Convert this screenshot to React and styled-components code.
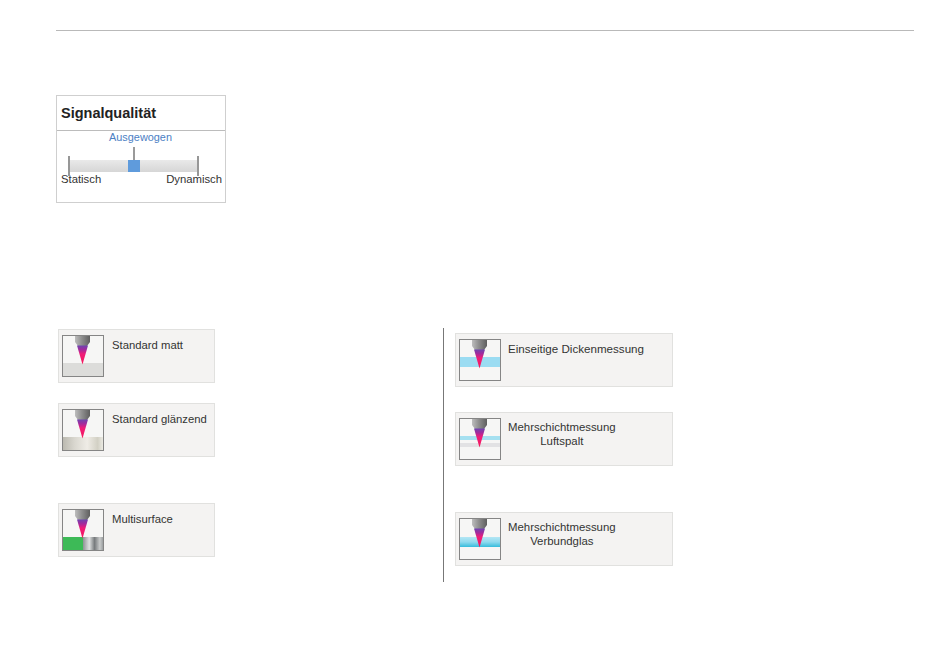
import React from 'react';
import styled, { createGlobalStyle } from 'styled-components';

const GlobalStyle = createGlobalStyle`
  html, body {
    margin: 0;
    background: #fff;
    font-family: "Liberation Sans", Arial, sans-serif;
  }
`;

const Page = styled.div`
  width: 950px;
  height: 665px;
  box-sizing: border-box;
  padding: 30px 36px 0 56px;
  overflow: hidden;
`;

const Rule = styled.div`
  height: 1px;
  background: #b9b9b9;
`;

const SignalPanel = styled.section`
  width: 170px;
  height: 108px;
  box-sizing: border-box;
  margin-top: 64px;
  border: 1px solid #cfcfcf;
`;

const PanelTitle = styled.h2`
  margin: 0;
  height: 35px;
  box-sizing: border-box;
  padding: 9px 0 0 4px;
  border-bottom: 1px solid #bcbcbc;
  font-size: 14.5px;
  line-height: 16px;
  font-weight: 700;
  color: #222;
`;

const SliderBlock = styled.div`
  padding: 0 3px 0 4px;
`;

const SliderValue = styled.div`
  margin-left: 48px;
  font-size: 10.9px;
  line-height: 12px;
  color: #4c7fc4;
`;

const Track = styled.div`
  position: relative;
  height: 12px;
  margin: 17px 24px 0 8px;
  background: linear-gradient(#e9e9e9, #d6d6d6);
`;

const Tick = styled.span`
  position: absolute;
  top: -4px;
  ${({ $side }) => $side}: -1px;
  width: 2px;
  height: 20px;
  background: #979797;
`;

const Thumb = styled.span`
  position: absolute;
  left: 59px;
  top: 0;
  width: 12px;
  height: 12px;
  background: #5f9bdc;

  &::before {
    content: '';
    position: absolute;
    left: 5px;
    top: -13px;
    width: 2px;
    height: 13px;
    background: #9a9a9a;
  }
`;

const SliderLabels = styled.div`
  display: flex;
  justify-content: space-between;
  margin-top: 1px;
  font-size: 11.3px;
  line-height: 13px;
  color: #333;
`;

const Columns = styled.div`
  display: flex;
  align-items: flex-start;
  margin-top: 125px;
`;

const LeftColumn = styled.div`
  width: 387px;
  padding: 1px 0 0 2px;
  box-sizing: border-box;
`;

const RightColumn = styled.div`
  height: 254px;
  box-sizing: border-box;
  border-left: 1px solid #777;
  padding: 5px 0 0 11px;
`;

const Card = styled.div`
  display: flex;
  align-items: flex-start;
  gap: 8px;
  width: ${({ $wide }) => ($wide ? 218 : 157)}px;
  height: 54px;
  box-sizing: border-box;
  margin-top: ${({ $gap }) => $gap || 0}px;
  padding: 5px 0 0 3px;
  background: #f4f3f2;
  border: 1px solid #e1e1df;
`;

const IconFrame = styled.svg`
  display: block;
  flex: none;
  width: 42px;
  height: 42px;
`;

const CardLabel = styled.div`
  margin-top: ${({ $tight }) => ($tight ? 2 : 3)}px;
  margin-left: ${({ $wide }) => ($wide ? -1 : 0)}px;
  font-size: ${({ $size }) => $size || 11.3}px;
  line-height: 14px;
  text-align: center;
  color: #333;
`;

function Sample({ kind }) {
  if (kind === 'matt') return <rect x="0" y="28" width="42" height="14" fill="#dcdcda" />;
  if (kind === 'gloss') return <rect x="0" y="28" width="42" height="14" fill="url(#gloss)" />;
  if (kind === 'multi') {
    return (
      <>
        <rect x="0" y="28" width="21" height="14" fill="#3dba57" />
        <rect x="21" y="28" width="21" height="14" fill="url(#metal)" />
      </>
    );
  }
  if (kind === 'single') return <rect x="0" y="18" width="42" height="10" fill="#9bdcf2" />;
  if (kind === 'gap') {
    return (
      <>
        <rect x="0" y="18" width="42" height="4" fill="#a5e0f0" />
        <rect x="0" y="25" width="42" height="4" fill="#e2e2e4" />
      </>
    );
  }
  return <rect x="0" y="19" width="42" height="10" fill="url(#laminate)" />;
}

function ProbeIcon({ kind }) {
  return (
    <IconFrame viewBox="0 0 42 42">
      <defs>
        <linearGradient id="steel" x1="0" x2="1" y1="0" y2="0">
          <stop offset="0" stopColor="#bdbdbd" />
          <stop offset="0.45" stopColor="#8f8f8f" />
          <stop offset="1" stopColor="#5f5f5f" />
        </linearGradient>
        <linearGradient id="beam" x1="0" x2="0" y1="0" y2="1">
          <stop offset="0" stopColor="#6d45b0" />
          <stop offset="0.22" stopColor="#a32a9c" />
          <stop offset="0.45" stopColor="#f01c78" />
          <stop offset="1" stopColor="#f5185a" />
        </linearGradient>
        <linearGradient id="gloss" x1="0" x2="1" y1="0" y2="0">
          <stop offset="0" stopColor="#b9b7ae" />
          <stop offset="0.3" stopColor="#d9d7cf" />
          <stop offset="0.6" stopColor="#efece6" />
          <stop offset="0.85" stopColor="#d2d0c4" />
          <stop offset="1" stopColor="#f0efe9" />
        </linearGradient>
        <linearGradient id="metal" x1="0" x2="1" y1="0" y2="0">
          <stop offset="0" stopColor="#8e9294" />
          <stop offset="0.3" stopColor="#dfe1e1" />
          <stop offset="0.55" stopColor="#777b7d" />
          <stop offset="0.8" stopColor="#c9cbcb" />
          <stop offset="1" stopColor="#8e9294" />
        </linearGradient>
        <linearGradient id="laminate" x1="0" x2="0" y1="0" y2="1">
          <stop offset="0" stopColor="#b4e6f4" />
          <stop offset="0.5" stopColor="#8fdaee" />
          <stop offset="1" stopColor="#35bcdc" />
        </linearGradient>
      </defs>
      <rect x="0" y="0" width="42" height="42" fill="#f6f6f5" />
      <Sample kind={kind} />
      <path d="M13 0H28V7L25 11H16L13 7Z" fill="url(#steel)" />
      <path d="M15 10.5H26L20.5 29.5Z" fill="url(#beam)" />
      <rect x="0.5" y="0.5" width="41" height="41" fill="none" stroke="#858585" />
    </IconFrame>
  );
}

function MeasureCard({ kind, wide, gap, size, tight, children }) {
  return (
    <Card $wide={wide} $gap={gap}>
      <ProbeIcon kind={kind} />
      <CardLabel $wide={wide} $size={size} $tight={tight}>{children}</CardLabel>
    </Card>
  );
}

export default function App() {
  return (
    <Page>
      <GlobalStyle />
      <Rule />
      <SignalPanel>
        <PanelTitle>Signalqualität</PanelTitle>
        <SliderBlock>
          <SliderValue>Ausgewogen</SliderValue>
          <Track>
            <Tick $side="left" />
            <Tick $side="right" />
            <Thumb />
          </Track>
          <SliderLabels>
            <span>Statisch</span>
            <span>Dynamisch</span>
          </SliderLabels>
        </SliderBlock>
      </SignalPanel>
      <Columns>
        <LeftColumn>
          <MeasureCard kind="matt">Standard matt</MeasureCard>
          <MeasureCard kind="gloss" gap={20}>Standard glänzend</MeasureCard>
          <MeasureCard kind="multi" gap={46}>Multisurface</MeasureCard>
        </LeftColumn>
        <RightColumn>
          <MeasureCard kind="single" wide size={11.6}>Einseitige Dickenmessung</MeasureCard>
          <MeasureCard kind="gap" wide gap={25} tight size={11.4}>Mehrschichtmessung<br />Luftspalt</MeasureCard>
          <MeasureCard kind="laminate" wide gap={46} tight size={11.4}>Mehrschichtmessung<br />Verbundglas</MeasureCard>
        </RightColumn>
      </Columns>
    </Page>
  );
}
